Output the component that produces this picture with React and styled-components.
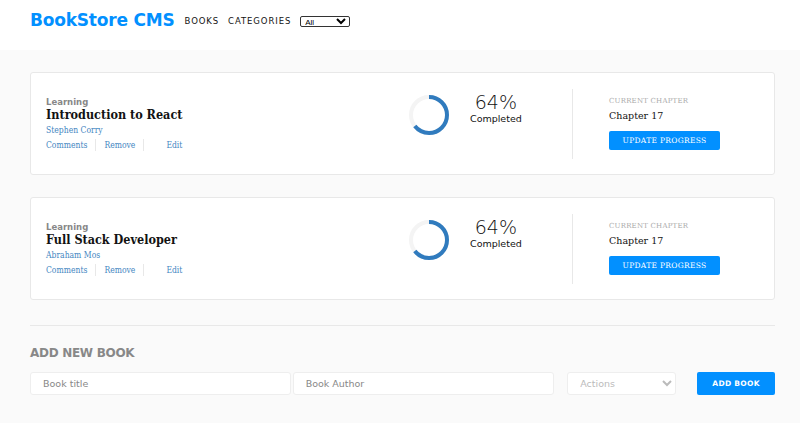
import React from "react";
import styled, { createGlobalStyle } from "styled-components";

const GlobalStyle = createGlobalStyle`
    * { box-sizing : border-box; }
    body {
        margin : 0;
        background : #fafafa;
        font-family : "Open Sans", sans-serif;
    }
`;

const Header = styled.header`
    height : 50px;
    background : #fff;
    padding : 0 30px 8px;
    display : flex;
    align-items : center;
    gap : 10px;
`;

const Logo = styled.h1`
    margin : 0 0 2px;
    font-family : "DejaVu Sans", sans-serif;
    font-size : 17px;
    font-weight : 700;
    color : #0290ff;
    letter-spacing : -0.2px;
`;

const Nav = styled.nav`
    display : flex;
    align-items : center;
    gap : 9px;
`;

const NavLink = styled.a`
    font-family : "DejaVu Sans", sans-serif;
    font-size : 8.5px;
    letter-spacing : 0.9px;
    color : #121212;
    text-transform : uppercase;
`;

const NavSelect = styled.select`
    width : 50px;
    height : 11px;
    font-size : 8px;
    padding : 0;
    border : 1px solid #333;
    border-radius : 2px;
    background : #fff;
`;

const Main = styled.main`
    padding : 22px 25px 0 30px;
    display : flex;
    flex-direction : column;
    gap : 22px;
`;

const Card = styled.section`
    height : 103px;
    background : #fff;
    border : 1px solid #e8e8e8;
    border-radius : 3px;
    display : flex;
    align-items : center;
    padding : 0 15px;
`;

const Info = styled.div`
    flex : 1;
    display : flex;
    flex-direction : column;
`;

const Genre = styled.span`
    font-family : "DejaVu Sans", sans-serif;
    font-size : 8.5px;
    font-weight : 700;
    color : #888;
`;

const Title = styled.h2`
    margin : 0 0 3px;
    font-family : "DejaVu Serif Condensed", "DejaVu Serif", serif;
    font-stretch : condensed;
    font-size : 12.5px;
    font-weight : 700;
    color : #121212;
`;

const Author = styled.span`
    font-family : "DejaVu Serif Condensed", "DejaVu Serif", serif;
    font-stretch : condensed;
    font-size : 8.5px;
    color : #4386bf;
`;

const Actions = styled.div`
    display : flex;
    align-items : center;
    margin-top : 4px;
`;

const ActionLink = styled.button`
    background : none;
    border : none;
    padding : 0 ${(p) => (p.$last ? "0" : "8px")} 0 ${(p) => (p.$first ? "0" : "8px")};
    font-family : "DejaVu Serif Condensed", "DejaVu Serif", serif;
    font-stretch : condensed;
    font-size : 8.5px;
    color : #4386bf;
    border-right : ${(p) => (p.$last ? "none" : "1px solid #e8e8e8")};
    height : 12px;
    line-height : 12px;
    margin-right : ${(p) => (p.$gap ? "14px" : "0")};
`;

const Progress = styled.div`
    width : 165px;
    display : flex;
    align-items : center;
    gap : 19px;
    padding-bottom : 18px;
`;

const Percent = styled.div`
    display : flex;
    flex-direction : column;
    align-items : center;
    font-family : "DejaVu Sans", sans-serif;
    margin-bottom : 14px;
`;

const PercentValue = styled.span`
    font-size : 19px;
    font-weight : 300;
    color : #121212;
    line-height : 22px;
`;

const PercentLabel = styled.span`
    font-size : 9.5px;
    color : #121212;
`;

const Divider = styled.div`
    width : 1px;
    height : 70px;
    background : #e8e8e8;
    margin-right : 36px;
`;

const Chapter = styled.div`
    width : 150px;
    display : flex;
    flex-direction : column;
`;

const ChapterLabel = styled.span`
    font-family : "DejaVu Serif", serif;
    font-size : 7px;
    color : #aaa;
    letter-spacing : 0.2px;
`;

const ChapterName = styled.span`
    font-family : "DejaVu Serif", serif;
    font-size : 9.5px;
    color : #121212;
    margin-top : 5px;
`;

const BlueButton = styled.button`
    width : ${(p) => p.$width};
    height : ${(p) => p.$height};
    margin-top : ${(p) => p.$top || "0"};
    background : #0290ff;
    border : none;
    border-radius : 2px;
    color : #fff;
    font-family : ${(p) => p.$font};
    font-size : 7.5px;
    font-weight : ${(p) => p.$weight || 400};
    letter-spacing : 0.3px;
`;

const Rule = styled.hr`
    margin : 3px 0 0;
    border : none;
    border-top : 1px solid #e8e8e8;
`;

const FormTitle = styled.h3`
    margin : -2px 0 0;
    font-family : "DejaVu Sans", sans-serif;
    font-size : 12px;
    font-weight : 700;
    color : #888;
    letter-spacing : -0.3px;
`;

const Form = styled.form`
    display : flex;
    align-items : center;
    margin-top : -10px;
`;

const Field = styled.input`
    width : ${(p) => p.$width};
    height : 23px;
    margin-right : ${(p) => p.$gap};
    border : 1px solid #eee;
    border-radius : 3px;
    padding : 0 12px;
    font-family : "DejaVu Sans", sans-serif;
    font-size : 9.5px;
    background : #fff;
    &::placeholder { color : #888; }
`;

const ActionSelect = styled.select`
    width : 109px;
    height : 23px;
    margin-right : 21px;
    border : 1px solid #eee;
    border-radius : 3px;
    padding : 0 8px;
    font-family : "DejaVu Sans", sans-serif;
    font-size : 9.5px;
    color : #bbb;
    background : #fff;
`;

function ProgressRing({ percent }) {
    const r = 18;
    const c = 2 * Math.PI * r;
    return (
        <svg width = "44" height = "44" viewBox = "0 0 44 44">
            <circle cx = "22" cy = "22" r = {r} fill = "none" stroke = "#f4f4f4" strokeWidth = "4" />
            <circle
                cx = "22" cy = "22" r = {r} fill = "none" stroke = "#307bbe" strokeWidth = "4"
                strokeDasharray = {`${c * percent / 100} ${c}`}
                transform = "rotate(-90 22 22)"
            />
        </svg>
    );
}

const books = [
    { id : 1, genre : "Learning", title : "Introduction to React", author : "Stephen Corry", progress : 64, chapter : "Chapter 17" },
    { id : 2, genre : "Learning", title : "Full Stack Developer", author : "Abraham Mos", progress : 64, chapter : "Chapter 17" },
];

function BookCard({ book }) {
    return (
        <Card>
            <Info>
                <Genre>{book.genre}</Genre>
                <Title>{book.title}</Title>
                <Author>{book.author}</Author>
                <Actions>
                    <ActionLink $first type = "button">Comments</ActionLink>
                    <ActionLink type = "button" $gap>Remove</ActionLink>
                    <ActionLink $last type = "button">Edit</ActionLink>
                </Actions>
            </Info>
            <Progress>
                <ProgressRing percent = {book.progress} />
                <Percent>
                    <PercentValue>{book.progress}%</PercentValue>
                    <PercentLabel>Completed</PercentLabel>
                </Percent>
            </Progress>
            <Divider />
            <Chapter>
                <ChapterLabel>CURRENT CHAPTER</ChapterLabel>
                <ChapterName>{book.chapter}</ChapterName>
                <BlueButton $width = "111px" $height = "19px" $top = "10px" $font = {`"DejaVu Serif", serif`}>UPDATE PROGRESS</BlueButton>
            </Chapter>
        </Card>
    );
}

function App() {
    return (
        <>
            <GlobalStyle />
            <Header>
                <Logo>BookStore CMS</Logo>
                <Nav>
                    <NavLink>Books</NavLink>
                    <NavLink>Categories</NavLink>
                    <NavSelect defaultValue = "All">
                        <option>All</option>
                    </NavSelect>
                </Nav>
            </Header>
            <Main>
                {books.map((book) => <BookCard key = {book.id} book = {book} />)}
                <Rule />
                <FormTitle>ADD NEW BOOK</FormTitle>
                <Form>
                    <Field $width = "261px" $gap = "2px" placeholder = "Book title" />
                    <Field $width = "262px" $gap = "13px" placeholder = "Book Author" />
                    <ActionSelect defaultValue = "">
                        <option value = "">Actions</option>
                    </ActionSelect>
                    <BlueButton type = "button" $width = "78px" $height = "23px" $font = {`"DejaVu Sans", sans-serif`} $weight = {700}>ADD BOOK</BlueButton>
                </Form>
            </Main>
        </>
    );
}

export default App;
